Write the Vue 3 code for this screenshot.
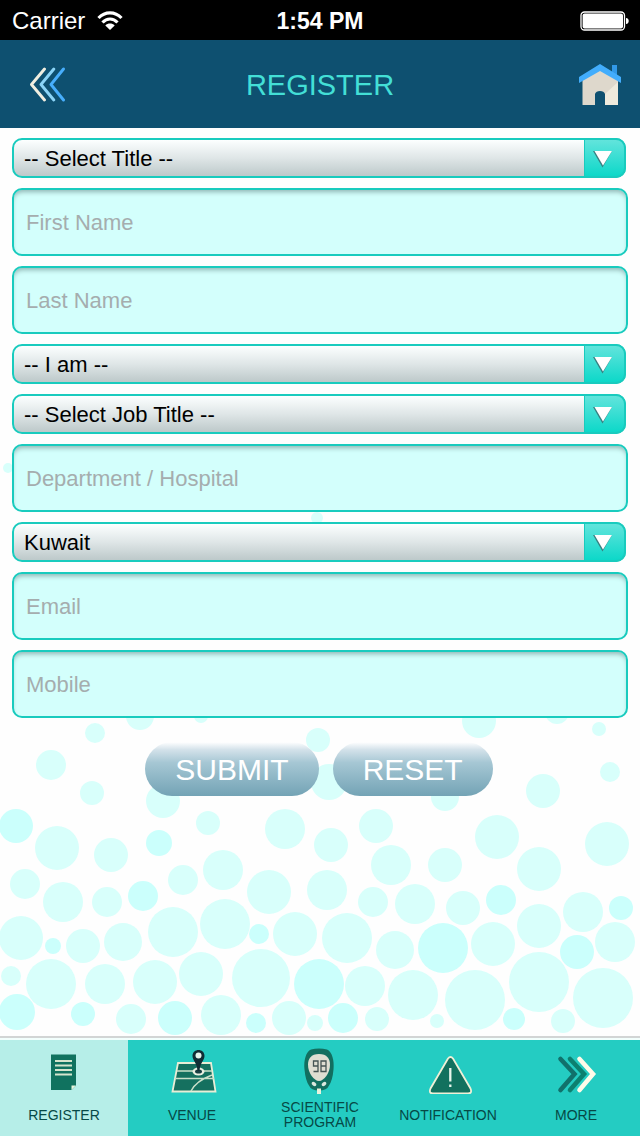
<script setup>
import { ref } from 'vue'

const fields = ref([
  { id: 'title', kind: 'select', label: 'Title', value: '-- Select Title --', options: ['-- Select Title --'] },
  { id: 'first', kind: 'text', label: 'First Name', value: '' },
  { id: 'last', kind: 'text', label: 'Last Name', value: '' },
  { id: 'role', kind: 'select', label: 'I am', value: '-- I am --', options: ['-- I am --'] },
  { id: 'job', kind: 'select', label: 'Job Title', value: '-- Select Job Title --', options: ['-- Select Job Title --'] },
  { id: 'department', kind: 'text', label: 'Department / Hospital', value: '' },
  { id: 'country', kind: 'select', label: 'Country', value: 'Kuwait', options: ['Kuwait'] },
  { id: 'email', kind: 'email', label: 'Email', value: '' },
  { id: 'mobile', kind: 'tel', label: 'Mobile', value: '' },
])

// Bubbles: [centre x, centre y, radius]
const pale = [
  [8, 468, 5], [317, 518, 6], [140, 716, 14], [201, 716, 7], [95, 733, 10], [51, 765, 15], [92, 793, 12],
  [163, 801, 17], [208, 823, 12], [285, 829, 20], [57, 848, 22], [111, 855, 17], [25, 884, 15],
  [63, 902, 20], [107, 902, 15], [183, 880, 15], [223, 870, 20], [269, 892, 22], [21, 938, 22],
  [83, 946, 17], [123, 942, 19], [173, 932, 25], [225, 924, 25], [295, 934, 22], [11, 976, 10],
  [51, 984, 25], [105, 984, 20], [155, 982, 22], [201, 974, 22], [261, 978, 29], [131, 1019, 15],
  [221, 1015, 20], [289, 1018, 17], [315, 1023, 8], [318, 740, 12], [329, 782, 18], [479, 721, 17],
  [557, 712, 12], [599, 729, 7], [610, 772, 10], [543, 791, 17], [445, 797, 14], [376, 826, 17],
  [331, 845, 17], [391, 865, 20], [445, 865, 17], [497, 837, 22], [539, 869, 22], [607, 844, 22],
  [327, 890, 20], [373, 902, 15], [415, 904, 20], [463, 908, 17], [347, 938, 25], [395, 950, 19],
  [493, 944, 22], [539, 926, 22], [583, 912, 20], [615, 942, 20], [365, 986, 20], [413, 995, 25],
  [475, 1000, 30], [539, 982, 30], [603, 998, 30], [377, 1019, 12], [437, 1021, 7], [563, 1021, 12],
]
const bright = [
  [16, 826, 17], [159, 843, 13], [143, 896, 15], [53, 946, 8], [259, 934, 10], [17, 1012, 18],
  [83, 1014, 12], [175, 1018, 17], [256, 1023, 10], [319, 984, 25], [501, 900, 15], [621, 908, 12],
  [443, 948, 25], [577, 952, 17], [343, 1018, 15], [514, 1019, 11],
]
</script>

<template>
  <div class="app">
    <div class="status">
      <div class="carrier">
        <span>Carrier</span>
        <svg width="26" height="20" viewBox="0 0 26 20" aria-hidden="true">
          <g fill="none" stroke="#fff" stroke-width="3.200">
            <path d="M1.500 7C8 .2 18 .2 24.500 7" />
            <path d="M5.500 11.500C10 6.800 16 6.800 20.500 11.500" />
          </g>
          <path d="M8.300 14.400c2.600-2.500 6.800-2.500 9.400 0L13 19z" fill="#fff" />
        </svg>
      </div>
      <strong class="clock">1:54 PM</strong>
      <svg class="battery" width="50" height="20" viewBox="0 0 50 20" aria-label="Battery full">
        <rect x="1" y="1" width="43.500" height="18" rx="3.500" fill="none" stroke="#fff" stroke-width="1.300" />
        <rect x="2.600" y="2.600" width="40.400" height="14.800" rx="2" fill="#fff" />
        <path d="M46 7c2 .3 2.700 1.400 2.700 3s-.7 2.700-2.700 3z" fill="#fff" />
      </svg>
    </div>

    <header class="bar">
      <button class="icon back" type="button" aria-label="Back">
        <svg width="36" height="36" viewBox="0 0 36 36" fill="none" stroke-width="2.900" stroke-linecap="round" stroke-linejoin="round">
          <path d="M34.500 2L22 17.500 34.500 33" stroke="#47aefc" />
          <path d="M24.800 2L12 17.500 24.800 33" stroke="#8bd4f7" />
          <path d="M15.500 2L2.500 17.500 15.500 33" stroke="#f0eee0" />
        </svg>
      </button>
      <h1>REGISTER</h1>
      <button class="icon home" type="button" aria-label="Home">
        <svg width="42" height="42" viewBox="0 0 42 42">
          <path d="M3.500 16L21 4l18 12v25H26V30q-1-3-5-3t-5 3v11H3.500z" fill="#ded8cc" />
          <path d="M39 18v23H26V30z" fill="#eeeadd" />
          <path d="M33 1h5v13l-5-3z" fill="#3199e8" />
          <path d="M0 13L21 0l21 13v6L21 7 0 19z" fill="#42adfc" />
        </svg>
      </button>
    </header>

    <main>
      <svg class="bubbles" viewBox="0 440 640 596" aria-hidden="true">
        <circle v-for="(b, i) in pale" :key="'p' + i" :cx="b[0]" :cy="b[1]" :r="b[2]" fill="#d8fffb" />
        <circle v-for="(b, i) in bright" :key="'b' + i" :cx="b[0]" :cy="b[1]" :r="b[2]" fill="#cbfffc" />
      </svg>
      <form @submit.prevent>
        <template v-for="f in fields" :key="f.id">
          <div v-if="f.kind === 'select'" class="picker">
            <select :id="f.id" v-model="f.value" :aria-label="f.label">
              <option v-for="o in f.options" :key="o">{{ o }}</option>
            </select>
            <span class="drop" aria-hidden="true">
              <svg width="20" height="18" viewBox="0 0 20 18">
                <path d="M0 1h19l-9.500 16.500z" fill="#387f80" />
                <path d="M1.500 1h17.500L10 15.500z" fill="#fff" />
              </svg>
            </span>
          </div>
          <input v-else :id="f.id" v-model="f.value" :type="f.kind" :placeholder="f.label" :aria-label="f.label" />
        </template>
        <div class="actions">
          <button class="pill" type="submit">SUBMIT</button>
          <button class="pill" type="reset">RESET</button>
        </div>
      </form>
    </main>

    <nav>
      <a href="#register" class="active" aria-current="page">
        <svg width="50" height="54" viewBox="0 0 50 54" aria-hidden="true">
          <path d="M12 14.500h25v31l-4.500 4.500H12z" fill="#10725f" />
          <path d="M32.500 45.500H37L32.500 50z" fill="#e9f5dd" />
          <path d="M16 21h17M16 25.500h17M16 30h17M16 34.500h17" stroke="#d5e5cd" stroke-width="1.800" />
        </svg>
        <span>REGISTER</span>
      </a>
      <a href="#venue">
        <svg width="50" height="54" viewBox="0 0 50 54" aria-hidden="true">
          <path d="M11 23h33l4.500 28.500h-43z" fill="#15705f" stroke="#e9edd6" stroke-width="1.800" />
          <path d="M10 31h35M8 38.500h39M24 51Q29 41 45 35" fill="none" stroke="#c9dfc9" stroke-width="1.500" />
          <ellipse cx="31.500" cy="31.500" rx="6" ry="4" fill="#e8eee0" />
          <ellipse cx="31.500" cy="31.500" rx="3.500" ry="2" fill="#173e42" />
          <path d="M25.500 16c0-8 12-8 12 0 0 4-4.500 7-5 15h-2c-.5-8-5-11-5-15z" fill="#102d35" />
          <circle cx="31.500" cy="15.500" r="3" fill="#e4f4ec" />
        </svg>
        <span>VENUE</span>
      </a>
      <a href="#program">
        <svg width="50" height="54" viewBox="0 0 50 54" aria-hidden="true">
          <path d="M16 9.500q8-2 16 0c5 2 7.500 11 6.500 20q-1 11-4.500 16-2 5-10 5t-10-5q-3.500-5-4.500-16c-1-9 1.500-18 6.500-20z" fill="#126f60" />
          <path d="M24 14c8 0 11 5 11 10.500C35 33 29 41 24 41s-11-8-11-16.500C13 19 16 14 24 14z" fill="#dfded2" />
          <path d="M23 26h-4.500v-5H23v10.500h-4.500M26 21h5v10.500h-5zM26 26h5" fill="none" stroke="#465454" stroke-width="1.300" />
          <ellipse cx="19" cy="44" rx="2.600" ry="1.800" transform="rotate(35 19 44)" fill="#dce9df" />
          <ellipse cx="29" cy="44" rx="2.600" ry="1.800" transform="rotate(-35 29 44)" fill="#dce9df" />
          <path d="M22 48.500h4V54h-4z" fill="#e9f3dd" />
        </svg>
        <span>SCIENTIFIC<br />PROGRAM</span>
      </a>
      <a href="#notification">
        <svg width="50" height="54" viewBox="0 0 50 54" aria-hidden="true">
          <path d="M25 18.500q2.500-3 5 0L47.500 48.500q2 5-2.500 5H10Q5.500 53.500 7.500 48.500z" fill="#12715e" stroke="#eff0d7" stroke-width="1.800" />
          <path d="M27.300 28v13.500M27.300 44.500v2.500" stroke="#e8f5eb" stroke-width="2.300" />
        </svg>
        <span>NOTIFICATION</span>
      </a>
      <a href="#more">
        <svg width="50" height="54" viewBox="0 0 50 54" aria-hidden="true" fill="none" stroke-width="4.600" stroke-linecap="round">
          <path d="M28.500 19L42 34 28.500 50" stroke="#fffbe9" />
          <path d="M19 19l14 15-14 16" stroke="#0d806f" />
          <path d="M9.500 19l14 15-14 16" stroke="#11716b" />
        </svg>
        <span>MORE</span>
      </a>
    </nav>
  </div>
</template>

<style>
body {
  margin: 0;
}
</style>

<style scoped>
.app {
  display: flex;
  flex-direction: column;
  min-height: 100vh;
  background: #fefefe;
  font-family: "Liberation Sans", Arial, sans-serif;
}
.app * {
  box-sizing: border-box;
}
svg {
  display: block;
  flex: none;
}
button,
input,
select {
  margin: 0;
  font-family: inherit;
}
.status {
  display: grid;
  grid-template-columns: 1fr auto 1fr;
  align-items: center;
  height: 40px;
  padding: 2px 10px 0;
  background: #000;
  color: #fff;
  font-size: 24px;
}
.carrier {
  display: flex;
  align-items: center;
  gap: 12px;
  padding-left: 2px;
}
.clock {
  font-size: 23px;
}
.battery {
  justify-self: end;
}
.bar {
  display: grid;
  grid-template-columns: 1fr auto 1fr;
  align-items: center;
  height: 88px;
  padding: 2px 16px 0;
  background: #0e5070;
}
.icon {
  display: flex;
  align-items: center;
  justify-content: center;
  width: 48px;
  height: 48px;
  padding: 0;
  border: 0;
  background: none;
}
.back {
  width: 62px;
}
.home {
  justify-self: end;
}
h1 {
  margin: 0;
  color: #43dfd6;
  font-size: 29px;
  font-weight: 400;
}
main {
  position: relative;
  flex: 1;
  padding: 10px 12px;
}
.bubbles {
  position: absolute;
  left: 0;
  bottom: 0;
  width: 100%;
}
form {
  position: relative;
  display: flex;
  flex-direction: column;
  gap: 10px;
}
.picker {
  position: relative;
  height: 40px;
  margin-right: 2px;
}
select {
  width: 100%;
  height: 100%;
  padding: 0 50px 0 10px;
  border: 2px solid #19cbbe;
  border-radius: 10px;
  background: linear-gradient(#fcffff, #dfe6e7 50%, #bdc9ca);
  color: #000;
  font-size: 22px;
  appearance: none;
}
.drop {
  position: absolute;
  top: 0;
  right: 0;
  display: flex;
  align-items: center;
  justify-content: center;
  width: 42px;
  height: 100%;
  padding: 2px 4px 0 0;
  border: 2px solid #19cbbe;
  border-left-width: 1px;
  border-radius: 0 10px 10px 0;
  background: linear-gradient(#62e4dc, #0dd8c9);
  pointer-events: none;
}
input {
  width: 100%;
  height: 68px;
  padding: 2px 12px 0;
  border: 2px solid #19cbbe;
  border-radius: 10px;
  background: #d3fffc;
  box-shadow: inset 0 4px 5px -2px #8fb5b3;
  color: #000;
  font-size: 22px;
}
input::placeholder {
  color: #a5adae;
  opacity: 1;
}
.actions {
  display: flex;
  justify-content: center;
  gap: 14px;
  padding: 14px 2px 0 0;
}
.pill {
  height: 54px;
  padding: 2px 30px 0;
  border: 0;
  border-radius: 27px;
  background: linear-gradient(#fff, #d4e2ea 14%, #a6c7d4 38%, #73a3b5);
  color: #fff;
  font-size: 30px;
}
nav {
  display: grid;
  grid-template-columns: repeat(5, 1fr);
  height: 100px;
  border-top: 2px solid #d2d5d5;
  box-shadow: inset 0 2px #f2fffd;
  background: #24ccc2;
}
nav a {
  display: flex;
  flex-direction: column;
  align-items: center;
  margin-top: 2px;
  color: #064946;
  font-size: 14px;
  line-height: 15px;
  text-align: center;
  text-decoration: none;
}
nav .active {
  background: #b6eee8;
}
nav span {
  display: flex;
  flex: 1;
  align-items: center;
}
</style>
